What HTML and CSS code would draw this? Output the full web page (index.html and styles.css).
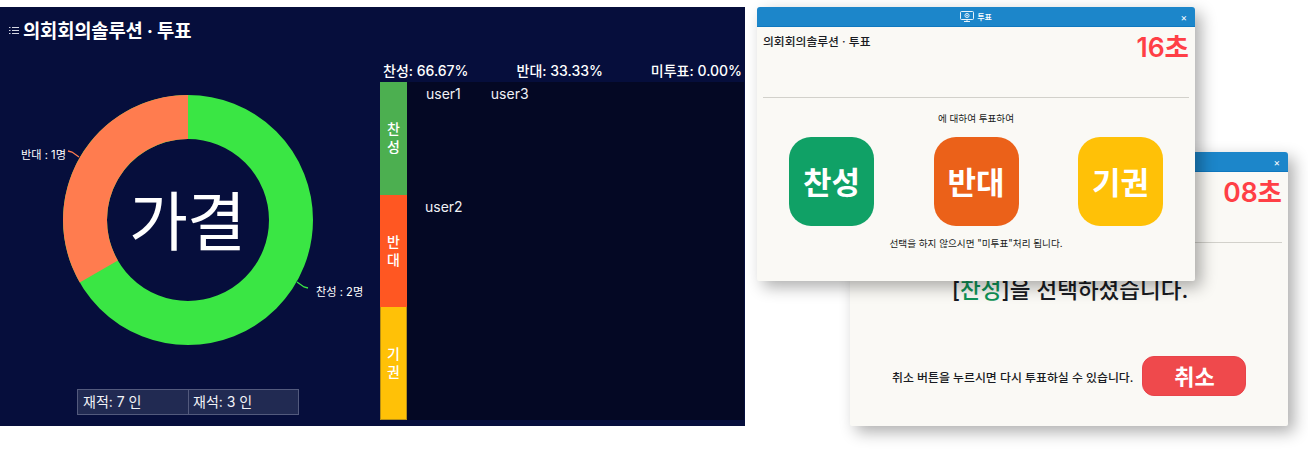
FILE: index.html
```html
<!DOCTYPE html>
<html lang="ko">
<head>
<meta charset="utf-8">
<title>투표</title>
<link rel="stylesheet" href="styles.css">
</head>
<body>
<main class="board">
  <section class="left">
    <h1 class="title"><svg class="list-icon" width="10" height="7" viewBox="0 0 10 7"><path d="M0 .5h1.5M3 .5h7M0 3.5h1.5M3 3.5h7M0 6.500h1.500M3 6.500h7" stroke="#d5d8e4" stroke-width="1" fill="none"/></svg>의회회의솔루션 · 투표</h1>
    <div class="chart">
      <svg class="donut" width="370" height="290" viewBox="0 0 370 290">
        <circle cx="188" cy="145" r="103" fill="none" stroke="#3ae644" stroke-width="44"/>
        <path d="M188 20A125 125 0 0 0 79.750 207.500L117.850 185.500A81 81 0 0 1 188 64Z" fill="#ff7c4f"/>
        <path d="M68 76L72 77L79 82" stroke="#ff7c4f" stroke-width="1.300" fill="none"/>
        <path d="M297 207L304 212L308 213" stroke="#3ae644" stroke-width="1.300" fill="none"/>
        <text class="slice-label" x="21" y="84">반대 : 1명</text>
        <text class="slice-label" x="316" y="221">찬성 : 2명</text>
        <text class="verdict" x="187" y="170" text-anchor="middle">가결</text>
      </svg>
    </div>
    <div class="attendance">
      <div class="att-cell">재적: 7 인</div>
      <div class="att-cell">재석: 3 인</div>
    </div>
  </section>
  <section class="right">
    <div class="rates">
      <span>찬성: 66.67%</span>
      <span>반대: 33.33%</span>
      <span>미투표: 0.00%</span>
    </div>
    <div class="votes">
      <div class="vote-row">
        <div class="vote-tag tag-yes">찬<br>성</div>
        <div class="voters voters-yes"><span>user1</span><span>user3</span></div>
      </div>
      <div class="vote-row">
        <div class="vote-tag tag-no">반<br>대</div>
        <div class="voters voters-no"><span>user2</span></div>
      </div>
      <div class="vote-row">
        <div class="vote-tag tag-abs">기<br>권</div>
        <div class="voters"></div>
      </div>
    </div>
  </section>
</main>

<article class="window window-back">
  <header class="win-bar"><span class="win-close">×</span></header>
  <div class="win-top">
    <div class="win-name"></div>
    <div class="win-count">08초</div>
  </div>
  <div class="chosen">[<em>찬성</em>]을 선택하셨습니다.</div>
  <div class="cancel-row">
    <span class="cancel-note">취소 버튼을 누르시면 다시 투표하실 수 있습니다.</span>
    <button class="cancel-btn">취소</button>
  </div>
</article>

<article class="window window-front">
  <header class="win-bar">
    <span class="win-heading">
      <svg width="14" height="11" viewBox="0 0 14 11"><rect x=".5" y=".5" width="13" height="8" rx="1" fill="none" stroke="#fff" stroke-width=".9"/><path d="M4 10.500h6M7 8.500v2" stroke="#fff" stroke-width=".9" fill="none"/><circle cx="7" cy="4.500" r="2.100" fill="none" stroke="#fff" stroke-width=".8"/><path d="M5.900 4.500h2.200M7 3.400v2.200" stroke="#fff" stroke-width=".6"/></svg>
      투표
    </span>
    <span class="win-close">×</span>
  </header>
  <div class="win-top">
    <div class="win-name">의회회의솔루션 · 투표</div>
    <div class="win-count">16초</div>
  </div>
  <p class="ask">에 대하여 투표하여</p>
  <div class="choices">
    <button class="choice c-yes">찬성</button>
    <button class="choice c-no">반대</button>
    <button class="choice c-abs">기권</button>
  </div>
  <p class="hint">선택을 하지 않으시면 "미투표"처리 됩니다.</p>
</article>
</body>
</html>
```
FILE: styles.css
```css
* { box-sizing: border-box; }
html, body { margin: 0; height: 449px; overflow: hidden; background: #fff; }
body {
  padding-top: 7px;
  position: relative;
  font-family: Inter, "Noto Sans CJK KR", sans-serif;
}
.board {
  width: 745px;
  height: 419px;
  background: #060e3c;
  color: #fff;
  display: flex;
}
.left { width: 380px; flex: none; display: flex; flex-direction: column; }
.title {
  margin: 0;
  padding: 14px 0 0 9px;
  font-size: 18.800px;
  line-height: 22px;
  font-weight: 700;
  letter-spacing: -.2px;
  display: flex;
  align-items: center;
  align-self: flex-start;
}
.list-icon { margin-right: 4px; margin-top: -3px; }
.chart { margin-top: 32px; height: 290px; }
.donut { display: block; }
.slice-label { font-size: 11.200px; fill: #fff; }
.verdict { font-size: 64px; fill: #fff; font-weight: 400; letter-spacing: -1px; }
.attendance {
  margin: 24px 0 0 77px;
  width: 222px;
  height: 26px;
  display: flex;
  background: #212a52;
  border: 1px solid #535a7d;
}
.att-cell {
  width: 110px;
  padding-left: 5px;
  font-size: 14px;
  line-height: 24px;
  color: #f2f3f8;
}
.att-cell + .att-cell { border-left: 1px solid #535a7d; padding-left: 4px; }

.right { flex: 1; display: flex; flex-direction: column; }
.rates {
  display: flex;
  justify-content: space-between;
  height: 75px;
  padding: 54px 3px 0 3px;
  font-size: 14px;
  line-height: 20px;
  font-weight: 500;
  white-space: nowrap;
}
.votes { width: 364px; height: 338px; background: #040824; display: flex; flex-direction: column; }
.vote-row { flex: 1; display: flex; min-height: 0; }
.vote-tag {
  width: 27px;
  flex: none;
  display: flex;
  align-items: center;
  justify-content: center;
  text-align: center;
  font-size: 14px;
  line-height: 18px;
  font-weight: 500;
}
.tag-yes { background: #4caf50; }
.tag-no { background: #ff5722; }
.tag-abs { background: #ffc107; border: 1px solid #b89016; border-top: 0; }
.voters {
  flex: 1;
  display: flex;
  padding: 3px 0 0 19px;
  font-size: 14px;
  line-height: 18px;
  color: #f0f1f6;
}
.voters-yes { padding-left: 19px; gap: 30px; }
.voters-no { padding-left: 18px; }

.window {
  position: absolute;
  width: 438px;
  height: 274px;
  background: #faf9f5;
  color: #191b22;
  border-radius: 3px 3px 2px 2px;
  box-shadow: 6px 6px 16px rgba(0, 0, 0, .32);
}
.window-front { left: 757px; top: 7px; }
.window-back { left: 850px; top: 152px; }
.win-bar {
  height: 20px;
  background: #1c86ca;
  border-bottom: 1px solid #0f78bf;
  border-radius: 3px 3px 0 0;
  color: #fff;
  display: flex;
  align-items: center;
  justify-content: center;
  position: relative;
}
.win-heading {
  display: flex;
  align-items: center;
  gap: 3px;
  font-size: 8px;
  font-weight: 500;
}
.win-close {
  position: absolute;
  right: 8px;
  top: 3px;
  font-size: 10px;
  line-height: 14px;
}
.win-top {
  height: 71px;
  margin: 0 6px;
  border-bottom: 1px solid #d2d1cb;
  display: flex;
  justify-content: space-between;
  align-items: flex-start;
}
.win-name { font-size: 11.800px; line-height: 16px; margin-top: 7px; font-weight: 500; }
.win-count {
  font-size: 26.500px;
  line-height: 30px;
  margin-top: 5px;
  color: #ff3f46;
  font-weight: 600;
}
.ask {
  margin: 14px 0 0;
  text-align: center;
  font-size: 9.600px;
  line-height: 13px;
}
.choices {
  display: flex;
  justify-content: space-between;
  padding: 0 32px;
  margin-top: 12px;
}
.choice {
  width: 85px;
  height: 89px;
  border: 0;
  border-radius: 22px;
  padding: 0 0 3px;
  color: #fff;
  font-family: inherit;
  font-size: 31px;
  font-weight: 700;
}
.c-yes { background: #10a166; }
.c-no { background: #eb6119; }
.c-abs { background: #ffc107; }
.hint {
  margin: 11px 0 0;
  text-align: center;
  font-size: 9.650px;
  line-height: 13px;
}
.chosen {
  margin-top: 30px;
  padding-left: 2px;
  text-align: center;
  font-size: 22.500px;
  line-height: 34px;
  font-weight: 500;
}
.chosen em { font-style: normal; color: #0f9257; }
.cancel-row {
  margin-top: 49px;
  padding-left: 42px;
  display: flex;
  align-items: center;
  gap: 9px;
}
.cancel-note { font-size: 11.900px; font-weight: 500; white-space: nowrap; }
.cancel-btn {
  width: 104px;
  height: 40px;
  border: 1px solid #e7444a;
  border-radius: 12px;
  background: #ef494c;
  color: #fff;
  font-family: inherit;
  font-size: 22px;
  font-weight: 700;
  padding: 0 0 2px;
}
```
